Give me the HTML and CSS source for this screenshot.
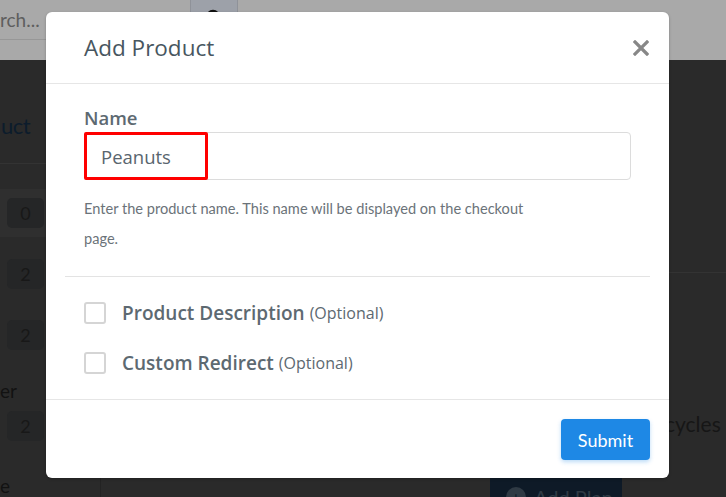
FILE: index.html
```html
<!DOCTYPE html>
<html lang="en">
<head>
<meta charset="utf-8">
<title>Add Product</title>
<link rel="stylesheet" href="styles.css">
</head>
<body>
<div class="page">
  <header class="topbar">
    <div class="search"><span class="search-text">rch...</span></div>
    <div class="search-btn">
      <svg class="search-icon" width="18" height="18" viewBox="0 0 18 18"><circle cx="8" cy="8" r="6" fill="none" stroke="#111" stroke-width="2.4"/><path d="M12.5 12.5 L17 17" stroke="#111" stroke-width="2.4"/></svg>
    </div>
  </header>
  <div class="main">
    <aside class="sidebar">
      <div class="side-title"><span class="side-title-text">uct</span></div>
      <div class="side-list">
        <div class="side-row active"><span class="badge">0</span></div>
        <div class="side-row"><span class="badge">2</span></div>
        <div class="side-row"><span class="badge">2</span></div>
        <div class="side-label"><span class="side-label-text">er</span></div>
        <div class="side-row tight"><span class="badge">2</span></div>
        <div class="side-label last"><span class="side-label-text">e</span></div>
      </div>
    </aside>
    <section class="content">
      <div class="content-head"></div>
      <p class="cycles">cycles t</p>
      <div class="plan-row">
        <button class="add-plan"><span class="plan-icon">+</span>Add Plan</button>
      </div>
    </section>
  </div>
</div>

<div class="modal">
  <div class="modal-header">
    <h1 class="modal-title">Add Product</h1>
    <button class="close" aria-label="Close">
      <svg width="16" height="16" viewBox="0 0 16 16"><path d="M2 2 L14 14 M14 2 L2 14" stroke="#878787" stroke-width="3.2" stroke-linecap="square"/></svg>
    </button>
  </div>
  <div class="modal-body">
    <div class="field">
      <label class="field-label" for="pname">Name</label>
      <div class="input-wrap">
        <input id="pname" class="text-input" type="text" value="Peanuts">
        <span class="highlight"></span>
      </div>
      <p class="help">Enter the product name. This name will be displayed on the checkout page.</p>
    </div>
    <div class="options">
      <label class="check-row"><span class="checkbox"></span><span class="check-label">Product Description</span><span class="optional">(Optional)</span></label>
      <label class="check-row"><span class="checkbox"></span><span class="check-label">Custom Redirect</span><span class="optional">(Optional)</span></label>
    </div>
  </div>
  <div class="modal-footer">
    <button class="submit">Submit</button>
  </div>
</div>
</body>
</html>
```

FILE: styles.css
```css
* { box-sizing: border-box; }
html, body { margin: 0; padding: 0; }
body {
  width: 726px;
  height: 497px;
  overflow: hidden;
  background: #2a2a2a;
  font-family: Lato, "Open Sans", sans-serif;
  position: relative;
}

/* ---------- background page (dimmed) ---------- */
.page { width: 726px; height: 497px; display: flex; flex-direction: column; overflow: hidden; }
.topbar {
  flex: none;
  height: 60px;
  background: #a9a9a9;
  display: flex;
  align-items: flex-start;
}
.search {
  flex: none;
  width: 190px;
  height: 40px;
  border-bottom: 1px solid #979797;
  display: flex;
  align-items: center;
  white-space: nowrap;
}
.search-text {
  font-size: 19px;
  color: #5e5e5e;
}
.search-btn {
  flex: none;
  width: 48px;
  height: 40px;
  background: #9da1a9;
  border-left: 1px solid #8f9299;
  border-right: 1px solid #8f9299;
  display: flex;
  justify-content: center;
  padding-top: 9px;
}
.main { flex: 1; min-height: 0; display: flex; overflow: hidden; }
.sidebar {
  flex: none;
  width: 101px;
  border-right: 1px solid #232323;
}
.side-title {
  height: 104px;
  border-bottom: 1px solid #333333;
  padding: 52px 0 0 1px;
}
.side-title-text {
  display: block;
  font-size: 22px;
  line-height: 28px;
  letter-spacing: -0.5px;
  color: #0c1c2c;
}
.side-list { padding-top: 25px; display: flex; flex-direction: column; }
.side-row {
  flex: none;
  height: 48px;
  display: flex;
  align-items: center;
  padding-left: 7px;
  margin-bottom: 13px;
}
.side-row.active { background: #2f2f2f; }
.side-row.tight { margin-bottom: 0; }
.badge {
  width: 37px;
  height: 30px;
  border-radius: 5px;
  background: #252627;
  color: #181818;
  font-size: 18px;
  display: flex;
  align-items: center;
  justify-content: center;
}
.side-label {
  flex: none;
  height: 22px;
  margin-top: 8px;
  margin-bottom: 0;
}
.side-label.last { margin-top: 28px; height: 16px; }
.side-label-text {
  display: block;
  font-size: 19px;
  line-height: 22px;
  color: #121212;
}
.side-label.last .side-label-text { line-height: 16px; }

.content { flex: 1; min-width: 0; display: flex; flex-direction: column; overflow: hidden; }
.content-head { flex: none; height: 213px; border-bottom: 1px solid #333333; }
.cycles {
  flex: none;
  margin: 138px 0 0 564px;
  font-size: 21px;
  line-height: 26px;
  color: #161616;
  white-space: nowrap;
}
.plan-row { flex: none; margin-top: 40px; padding-left: 389px; }
.add-plan {
  width: 132px;
  height: 40px;
  border: 0;
  border-radius: 0;
  background: #0e1a27;
  color: #2f3a44;
  font-family: Lato, sans-serif;
  font-size: 20px;
  display: flex;
  align-items: center;
  gap: 8px;
  padding: 0 0 0 16px;
}
.plan-icon {
  width: 20px; height: 20px; border-radius: 50%;
  background: #2f3a44; color: #0e1a27;
  font-size: 16px; line-height: 20px; text-align: center;
}

/* ---------- modal ---------- */
.modal {
  position: absolute;
  left: 46px;
  top: 12px;
  width: 623px;
  height: 466px;
  background: #ffffff;
  border-radius: 6px;
  display: flex;
  flex-direction: column;
  box-shadow: 0 1px 3px rgba(0,0,0,0.25);
  font-family: "Open Sans", Lato, sans-serif;
}
.modal-header {
  flex: none;
  height: 72px;
  border-bottom: 1px solid #e6e6e6;
  display: flex;
  align-items: center;
  justify-content: space-between;
  padding: 0 20px 0 38px;
}
.modal-title {
  margin: 0;
  font-size: 22.5px;
  font-weight: 400;
  color: #475660;
}
.close {
  border: 0;
  background: none;
  padding: 0;
  width: 16px;
  height: 16px;
  display: flex;
}
.modal-body {
  flex: none;
  height: 315px;
  padding: 0 19px;
}
.field {
  padding: 24px 19px 22px;
  border-bottom: 1px solid #e3e3e3;
}
.field-label {
  display: block;
  font-size: 18.5px;
  line-height: 20px;
  font-weight: 600;
  color: #5d6971;
  margin-bottom: 4px;
}
.input-wrap { position: relative; }
.text-input {
  display: block;
  width: 100%;
  height: 48px;
  border: 1px solid #dcdcdc;
  border-radius: 4px;
  padding: 0 16px;
  font-family: "Open Sans", sans-serif;
  font-size: 18.5px;
  color: #59656e;
  outline: none;
}
.highlight {
  position: absolute;
  left: 0;
  top: 0;
  width: 124px;
  height: 48px;
  border: 3px solid #ff0000;
  border-radius: 2px;
  pointer-events: none;
}
.help {
  margin: 14px 0 0;
  max-width: 460px;
  font-family: Lato, sans-serif;
  font-size: 14.6px;
  line-height: 30px;
  color: #6b7379;
}
.options {
  padding: 21px 19px 0;
  display: flex;
  flex-direction: column;
  gap: 20px;
}
.check-row {
  height: 30px;
  display: flex;
  align-items: center;
  color: #5d6971;
}
.checkbox {
  width: 22px;
  height: 22px;
  border: 2px solid #d5d5d5;
  border-radius: 3px;
  margin-right: 16px;
  flex: none;
}
.check-label {
  font-size: 19px;
  font-weight: 600;
  margin-right: 5px;
}
.optional { font-size: 16px; }
.modal-footer {
  flex: 1;
  border-top: 1px solid #e6e6e6;
  display: flex;
  justify-content: flex-end;
  align-items: flex-start;
  padding: 19px 19px 0 0;
}
.submit {
  width: 89px;
  height: 41px;
  border: 0;
  border-radius: 4px;
  background: #1e88e5;
  color: #ffffff;
  font-family: Lato, sans-serif;
  font-size: 18px;
  box-shadow: 0 2px 4px rgba(30,136,229,0.3);
}
```
